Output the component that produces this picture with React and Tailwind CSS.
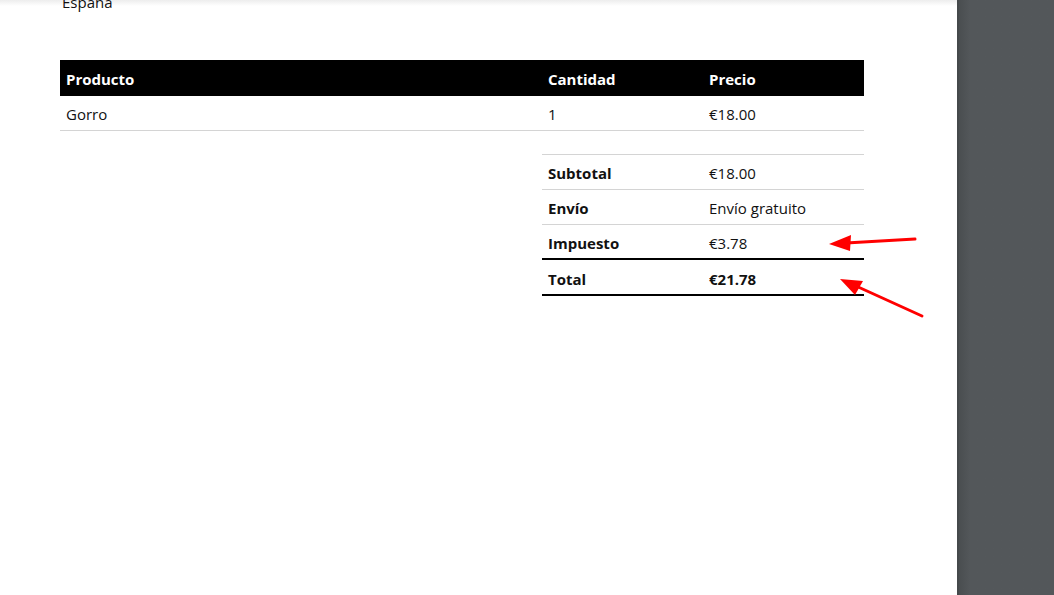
const items = [{ name: 'Gorro', qty: '1', price: '€18.00' }]

const totals = [
  { label: 'Subtotal', value: '€18.00' },
  { label: 'Envío', value: 'Envío gratuito' },
  { label: 'Impuesto', value: '€3.78', thick: true },
  { label: 'Total', value: '€21.78', bold: true, thick: true, tall: true },
]

function Arrows() {
  return (
    <svg className="absolute left-0 top-0 pointer-events-none" width="1054" height="595">
      <g stroke="#f00" strokeWidth="3" strokeLinecap="round" fill="none">
        <line x1="915" y1="239" x2="846" y2="243" />
        <line x1="922" y1="316" x2="856" y2="286" />
      </g>
      <polygon points="829,244 851,235 850,251" fill="#f00" />
      <polygon points="840,279 863,281 855,295" fill="#f00" />
    </svg>
  )
}

export default function App() {
  return (
    <div className="relative flex h-[595px] w-[1054px] overflow-hidden bg-[#53575a] text-[15px] text-[#111] [font-family:'Open_Sans',sans-serif]">
      <div className="relative w-[957px] shrink-0 bg-white">
        <div className="absolute inset-x-0 top-0 h-[6px] bg-gradient-to-b from-[#ededed] to-white" />
        <div className="relative pl-[62px] -mt-[8px] leading-[20px]">España</div>

        <div className="ml-[60px] mt-[48px] w-[804px]">
          <div className="flex h-[36px] items-center bg-black pt-[2px] font-bold text-white">
            <div className="w-[482px] pl-[6px]">Producto</div>
            <div className="w-[161px] pl-[6px]">Cantidad</div>
            <div className="w-[161px] pl-[6px]">Precio</div>
          </div>
          {items.map(it => (
            <div key={it.name} className="flex h-[35px] items-center border-b border-[#d4d4d4] pt-[2px]">
              <div className="w-[482px] pl-[6px]">{it.name}</div>
              <div className="w-[161px] pl-[6px]">{it.qty}</div>
              <div className="w-[161px] pl-[6px]">{it.price}</div>
            </div>
          ))}

          <div className="ml-[482px] mt-[23px] w-[322px] border-t border-[#d4d4d4]">
            {totals.map(t => (
              <div
                key={t.label}
                className={`flex items-center ${t.tall ? 'h-[36px]' : 'h-[35px]'} ${t.thick ? 'border-b-2 border-black pt-[4px]' : 'border-b border-[#d4d4d4] pt-[2px]'}`}
              >
                <div className="w-[161px] pl-[6px] font-bold">{t.label}</div>
                <div className={`w-[161px] pl-[6px] ${t.bold ? 'font-bold' : ''}`}>{t.value}</div>
              </div>
            ))}
          </div>
        </div>
      </div>
      <div className="w-[2px] bg-[#45494b]" />
      <div className="flex-1 bg-gradient-to-r from-[#4a4e50] to-[#53575a] to-[12%]" />
      <Arrows />
    </div>
  )
}
